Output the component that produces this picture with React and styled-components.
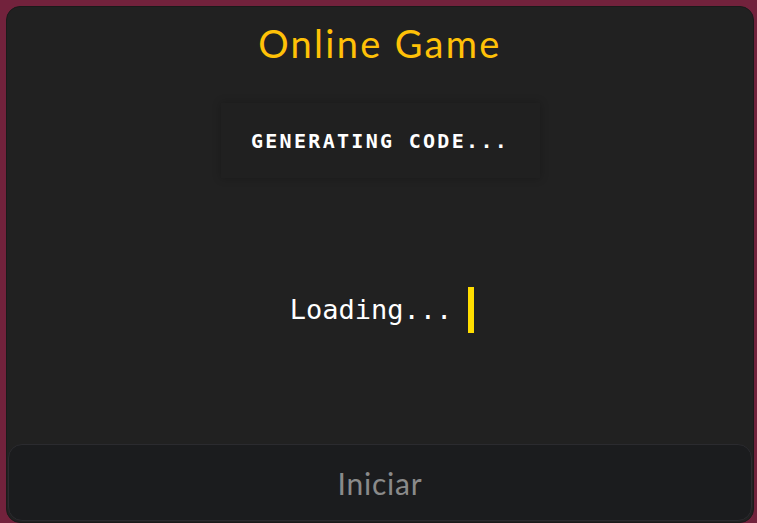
import React from "react";
import styled, { createGlobalStyle } from "styled-components";

const GlobalStyle = createGlobalStyle`
  html, body {
    margin: 0;
    padding: 0;
    background: #72223c;
  }
  #root {
    height: 523px;
  }
`;

const Card = styled.div`
  box-sizing: border-box;
  margin: 6px 3px 0 6px;
  height: 517px;
  background: #212121;
  border: 1px solid #1a1a1a;
  border-radius: 14px;
  display: flex;
  flex-direction: column;
  align-items: center;
  overflow: hidden;
`;

const Title = styled.h1`
  margin: 15px 0 0;
  font-family: "Lato", "Noto Sans", sans-serif;
  font-weight: 400;
  font-size: 38px;
  line-height: 42px;
  letter-spacing: 2.3px;
  color: #ffc107;
`;

const CodeBox = styled.div`
  margin-top: 39px;
  width: 319px;
  height: 75px;
  display: flex;
  align-items: center;
  justify-content: center;
  background: #202020;
  box-shadow: 0 0 8px rgba(0, 0, 0, 0.25);
  font-family: "DejaVu Sans Mono", monospace;
  font-weight: 700;
  font-size: 20px;
  letter-spacing: 2.3px;
  color: #ffffff;
`;

const Middle = styled.div`
  flex: 1;
  display: flex;
  align-items: center;
  justify-content: center;
  gap: 16px;
  padding-left: 4px;
  padding-bottom: 3px;
`;

const LoadingText = styled.span`
  font-family: "DejaVu Sans Mono", monospace;
  font-size: 27px;
  color: #ffffff;
`;

const Cursor = styled.span`
  display: block;
  width: 6px;
  height: 46px;
  background: #ffdd00;
`;

const StartButton = styled.button`
  box-sizing: border-box;
  width: calc(100% - 2px);
  height: 77px;
  margin-bottom: 1px;
  background: #1b1c1e;
  border: 1px solid #2b2b2f;
  border-radius: 14px;
  font-family: "Lato", "Noto Sans", sans-serif;
  font-size: 30px;
  letter-spacing: 0.8px;
  color: #8a8a8a;
  cursor: pointer;
`;

export default function App() {
  return (
    <>
      <GlobalStyle />
      <Card>
        <Title>Online Game</Title>
        <CodeBox>GENERATING CODE...</CodeBox>
        <Middle>
          <LoadingText>Loading...</LoadingText>
          <Cursor />
        </Middle>
        <StartButton>Iniciar</StartButton>
      </Card>
    </>
  );
}
